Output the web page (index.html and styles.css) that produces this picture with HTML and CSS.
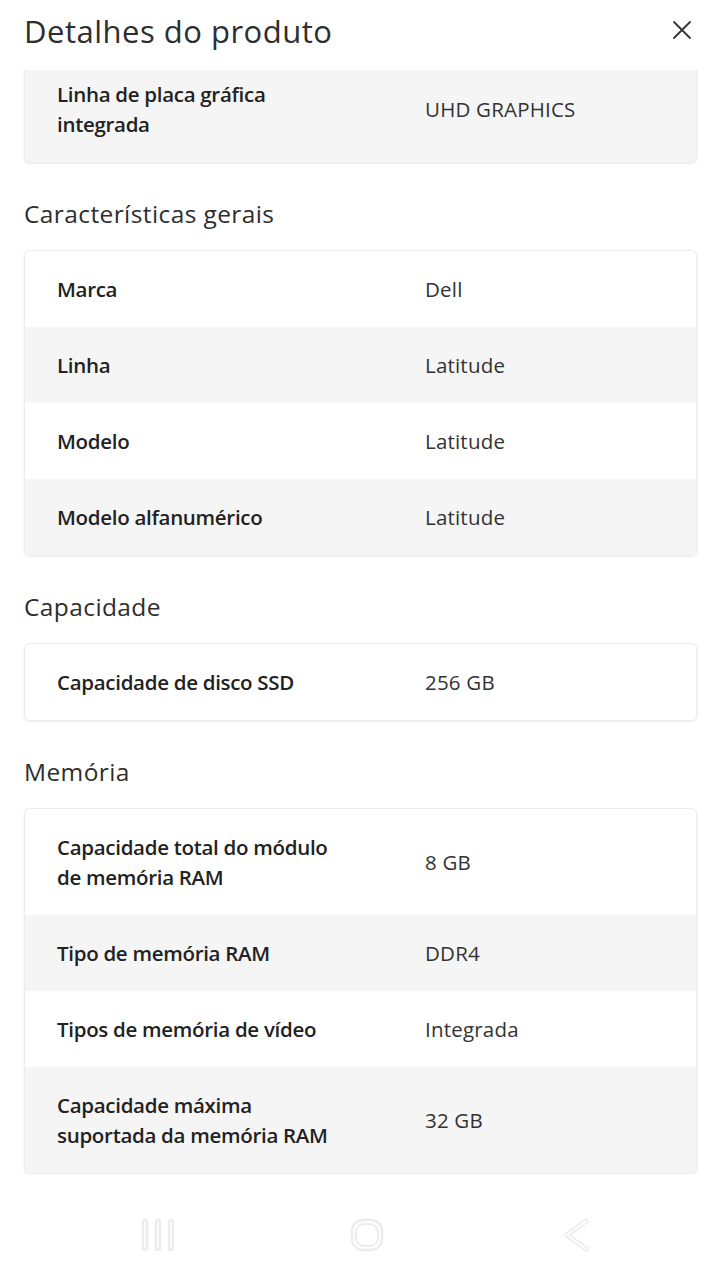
FILE: index.html
```html
<!DOCTYPE html>
<html lang="pt-BR">
<head>
  <meta charset="UTF-8" />
  <meta name="viewport" content="width=device-width, initial-scale=1.0"/>
  <title>Detalhes do produto</title>
  <link rel="stylesheet" href="styles.css">
</head>
<body>
  <div class="sheet">
    <div class="header">
      <h1>Detalhes do produto</h1>
      <button class="close" aria-label="Fechar">
        <svg width="22" height="22" viewBox="0 0 22 22"><path d="M3 3 L19 19 M19 3 L3 19" stroke="#333" stroke-width="1.8" stroke-linecap="round" fill="none"/></svg>
      </button>
    </div>

    <div class="content">
      <div class="card first">
        <div class="row grey">
          <div class="label">Linha de placa gráfica integrada</div>
          <div class="value">UHD GRAPHICS</div>
        </div>
      </div>

      <h2>Características gerais</h2>
      <div class="card">
        <div class="row"><div class="label">Marca</div><div class="value">Dell</div></div>
        <div class="row grey"><div class="label">Linha</div><div class="value">Latitude</div></div>
        <div class="row"><div class="label">Modelo</div><div class="value">Latitude</div></div>
        <div class="row grey"><div class="label">Modelo alfanumérico</div><div class="value">Latitude</div></div>
      </div>

      <h2>Capacidade</h2>
      <div class="card">
        <div class="row"><div class="label">Capacidade de disco SSD</div><div class="value">256 GB</div></div>
      </div>

      <h2>Memória</h2>
      <div class="card">
        <div class="row"><div class="label">Capacidade total do módulo de memória RAM</div><div class="value">8 GB</div></div>
        <div class="row grey"><div class="label">Tipo de memória RAM</div><div class="value">DDR4</div></div>
        <div class="row"><div class="label">Tipos de memória de vídeo</div><div class="value">Integrada</div></div>
        <div class="row grey"><div class="label">Capacidade máxima suportada da memória RAM</div><div class="value">32 GB</div></div>
      </div>
    </div>
  </div>

  <div class="navbar">
    <svg width="36" height="36" viewBox="0 0 36 36"><g fill="none" stroke="#ececec" stroke-width="2.4"><rect x="3" y="3" width="4" height="30" rx="2"/><rect x="16" y="3" width="4" height="30" rx="2"/><rect x="29" y="3" width="4" height="30" rx="2"/></g></svg>
    <svg width="36" height="36" viewBox="0 0 36 36"><rect x="3" y="3" width="30" height="30" rx="11" fill="none" stroke="#ececec" stroke-width="2.4"/><rect x="7" y="7" width="22" height="22" rx="8" fill="none" stroke="#ececec" stroke-width="2"/></svg>
    <svg width="36" height="36" viewBox="0 0 36 36"><path d="M29 4 L10 18 L29 32" fill="none" stroke="#ececec" stroke-width="5" stroke-linecap="round" stroke-linejoin="round"/><path d="M29 4 L10 18 L29 32" fill="none" stroke="#fff" stroke-width="1.6" stroke-linecap="round" stroke-linejoin="round"/></svg>
  </div>
</body>
</html>
```

FILE: styles.css
```css
body {
  margin: 0;
  padding: 0;
  background: #fff;
  font-family: "Open Sans", Arial, sans-serif;
  color: #333;
}

.sheet {
  height: 1190px;
  display: flex;
  flex-direction: column;
}

.header {
  height: 70px;
  display: flex;
  align-items: center;
  justify-content: space-between;
  padding: 0 24px;
  background: #fff;
  flex-shrink: 0;
}

.header h1 {
  margin: 0 0 8px;
  font-size: 31px;
  font-weight: 500;
  letter-spacing: 0.5px;
  color: #2e2e2e;
}

.close {
  border: none;
  background: none;
  padding: 0;
  margin: 0 4px 10px 0;
  display: flex;
}

.content {
  overflow: hidden;
  padding: 0 24px;
}

.card {
  background: #fff;
  border: 1px solid #ececec;
  border-radius: 6px;
  box-shadow: 0 1px 3px rgba(0, 0, 0, 0.08);
  overflow: hidden;
}

.card.first {
  margin-top: -14px;
  border-top: none;
  border-radius: 0 0 6px 6px;
}

.row {
  display: grid;
  grid-template-columns: 295px 1fr;
  column-gap: 73px;
  align-items: center;
  padding: 23px 32px;
  line-height: 30px;
}

.row.grey {
  background: #f5f5f5;
}

.label {
  font-size: 20.5px;
  font-weight: 600;
  letter-spacing: -0.3px;
  color: #222;
}

.value {
  font-size: 20.5px;
  color: #333;
  letter-spacing: 0.2px;
}

h2 {
  margin: 36px 0 21px;
  font-size: 24.5px;
  line-height: 30px;
  font-weight: 500;
  letter-spacing: 0.4px;
  color: #2e2e2e;
}

.navbar {
  height: 90px;
  display: flex;
  justify-content: space-between;
  align-items: center;
  padding: 0 128px 0 140px;
}
```
